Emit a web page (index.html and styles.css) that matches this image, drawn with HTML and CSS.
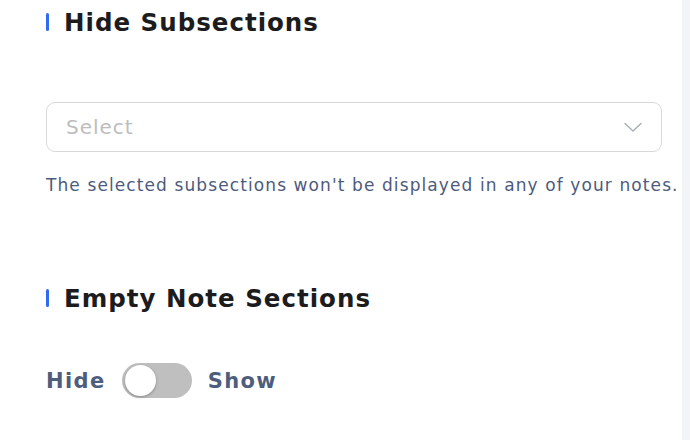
FILE: index.html
```html
<!DOCTYPE html>
<html>
<head>
<meta charset="utf-8">
<link rel="stylesheet" href="styles.css">
</head>
<body>
<div class="page">
  <main class="content">
    <section class="section">
      <h2 class="section-title"><span class="bar"></span>Hide Subsections</h2>
      <div class="select">
        <span class="placeholder">Select</span>
        <svg class="chevron" width="18" height="10" viewBox="0 0 18 10"><path d="M1 1.5 L9 9 L17 1.5" fill="none" stroke="#a9adb4" stroke-width="1.4" stroke-linecap="round" stroke-linejoin="round"/></svg>
      </div>
      <p class="help">The selected subsections won't be displayed in any of your notes.</p>
    </section>
    <section class="section second">
      <h2 class="section-title"><span class="bar"></span>Empty Note Sections</h2>
      <div class="toggle-row">
        <span class="toggle-label">Hide</span>
        <span class="toggle"><span class="knob"></span></span>
        <span class="toggle-label">Show</span>
      </div>
    </section>
  </main>
  <aside class="strip"></aside>
</div>
</body>
</html>
```
FILE: styles.css
```css
html, body {
  margin: 0;
  padding: 0;
  background: #ffffff;
}
body {
  font-family: "DejaVu Sans", "Liberation Sans", sans-serif;
}
.page {
  display: flex;
  width: 690px;
  height: 440px;
  overflow: hidden;
}
.content {
  width: 682px;
  flex: none;
  padding-left: 46px;
  box-sizing: border-box;
}
.strip {
  flex: 1;
  background: #f3f4f8;
}
.section-title {
  display: flex;
  align-items: center;
  margin: 0;
  padding-top: 4px;
  height: 36px;
  font-size: 24.5px;
  font-weight: 700;
  letter-spacing: 1px;
  color: #1c1c1e;
}
.bar {
  width: 3px;
  height: 18px;
  border-radius: 2px;
  background: #2f6bf0;
  margin-right: 15px;
}
.select {
  margin-top: 62px;
  width: 616px;
  height: 50px;
  box-sizing: border-box;
  border: 1px solid #d9d9d9;
  border-radius: 9px;
  display: flex;
  align-items: center;
  justify-content: space-between;
  padding: 0 19px 0 19px;
}
.placeholder {
  font-size: 20px;
  letter-spacing: 1px;
  color: #bdbdbd;
}
.chevron {
  display: block;
}
.help {
  margin: 23px 0 0;
  font-size: 17px;
  letter-spacing: 1.1px;
  color: #4d5b7c;
  white-space: nowrap;
}
.second {
  margin-top: 81px;
}
.toggle-row {
  margin-top: 47px;
  display: flex;
  align-items: center;
  gap: 16px;
}
.toggle-label {
  font-size: 21px;
  font-weight: 700;
  letter-spacing: 1.4px;
  color: #4f5d7d;
}
.toggle {
  position: relative;
  width: 70px;
  height: 35px;
  border-radius: 18px;
  background: #bfbfbf;
}
.knob {
  position: absolute;
  left: 3px;
  top: 2px;
  width: 31px;
  height: 31px;
  border-radius: 50%;
  background: #ffffff;
  box-shadow: 0 1px 3px rgba(0,0,0,0.3);
}
```
